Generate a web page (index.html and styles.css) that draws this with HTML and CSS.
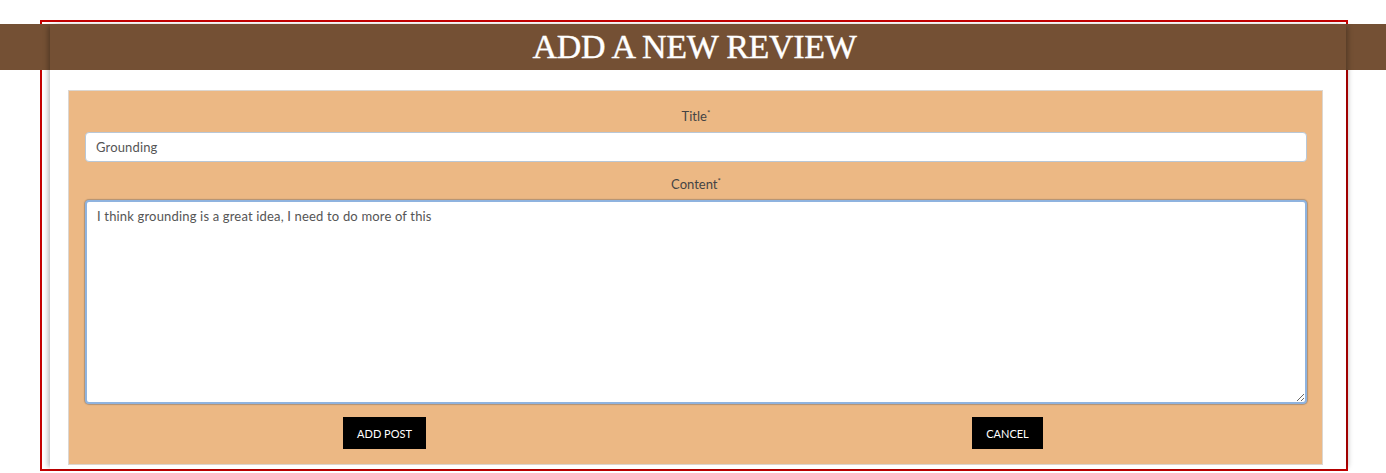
FILE: index.html
```html
<!DOCTYPE html>
<html lang="en">
<head>
<meta charset="utf-8">
<title>Add a new review</title>
<link rel="stylesheet" href="styles.css">
</head>
<body>
<div class="frame">
  <header class="banner"><h1 class="banner-title">ADD A NEW REVIEW</h1></header>
  <main class="sheet">
    <form class="card">
      <label class="field-label" for="title">Title<span class="req">*</span></label>
      <input class="text-input" id="title" type="text" value="Grounding">
      <label class="field-label field-label-gap" for="content">Content<span class="req">*</span></label>
      <textarea class="text-area" id="content">I think grounding is a great idea, I need to do more of this</textarea>
      <div class="actions">
        <div class="action-col"><button class="btn" type="button">ADD POST</button></div>
        <div class="action-col"><button class="btn" type="button">CANCEL</button></div>
      </div>
    </form>
  </main>
</div>
</body>
</html>
```
FILE: styles.css
```css
html, body {
  margin: 0;
  padding: 0;
  background: #ffffff;
  overflow: hidden;
}
body {
  font-family: Lato, "Open Sans", sans-serif;
  color: #444;
}
.frame {
  margin: 20px 38px 0 40px;
  border: 2px solid #c40000;
  height: 447px;
  display: grid;
  grid-template-columns: 1fr;
  grid-template-rows: 1fr;
}
.banner {
  grid-area: 1 / 1;
  align-self: start;
  margin: 2px -40px 0 -42px;
  height: 46px;
  background: #745034;
  display: flex;
  align-items: center;
  justify-content: center;
}
.banner-title {
  margin: 0;
  padding-left: 3px;
  font-family: "Liberation Serif", serif;
  font-weight: normal;
  font-size: 34px;
  line-height: 46px;
  color: #ffffff;
  letter-spacing: -0.3px;
  -webkit-text-stroke: 0.4px #ffffff;
}
.sheet {
  grid-area: 1 / 1;
  z-index: 1;
  margin: 2px 0 0 8px;
  padding: 66px 23px 0 18px;
  box-shadow: -4px 0 5px -2px rgba(0, 0, 0, 0.28), 4px 0 5px -2px rgba(0, 0, 0, 0.28);
  display: flex;
  flex-direction: column;
}
.card {
  background: #ecb884;
  border: 1px solid #dcd6d0;
  padding: 15px 15px 15px 16px;
  display: flex;
  flex-direction: column;
}
.field-label {
  display: block;
  text-align: center;
  font-size: 13px;
  line-height: 20px;
  height: 20px;
  color: #444;
  margin-bottom: 6px;
}
.field-label-gap {
  margin-top: 12px;
}
.req {
  font-size: 8px;
  line-height: 0;
  vertical-align: 5px;
}
.text-input {
  box-sizing: border-box;
  height: 30px;
  width: 100%;
  margin: 0;
  padding: 0 10px;
  border: 1px solid #b9c7d6;
  border-radius: 4px;
  background: #ffffff;
  font-family: Lato, "Open Sans", sans-serif;
  font-size: 13px;
  letter-spacing: 0.15px;
  color: #555;
}
.text-area {
  box-sizing: border-box;
  height: 204px;
  width: 100%;
  margin: 0;
  padding: 5px 10px;
  border: 2px solid #8fb3df;
  border-radius: 4px;
  box-shadow: 0 0 1px 1px rgba(90, 90, 90, 0.4);
  background: #ffffff;
  font-family: Lato, "Open Sans", sans-serif;
  font-size: 13px;
  line-height: 18px;
  letter-spacing: 0.17px;
  color: #555;
  resize: vertical;
}
.actions {
  display: flex;
  margin: 13px -12px 0 -12px;
}
.action-col {
  flex: 1;
  display: flex;
  justify-content: center;
}
.btn {
  height: 32px;
  padding: 0 14px;
  border: none;
  background: #000000;
  color: #ffffff;
  font-family: Lato, "Open Sans", sans-serif;
  font-size: 11px;
  cursor: pointer;
}
```
